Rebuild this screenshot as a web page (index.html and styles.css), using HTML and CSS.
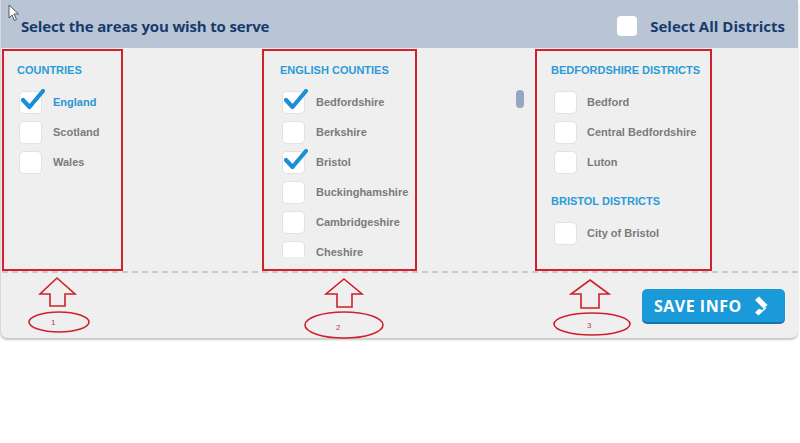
FILE: index.html
```html
<!DOCTYPE html>
<html>
<head>
<meta charset="utf-8">
<link rel="stylesheet" href="styles.css">
</head>
<body>
<div class="panel">
  <svg class="cursor" width="12" height="18" viewBox="0 0 12 18"><path d="M1 1 L1 14 L4 11 L6.5 16.5 L8.5 15.5 L6 10 L10.5 10 Z" fill="#fff" stroke="#555" stroke-width="1"/></svg>
  <div class="header">
    <div class="title">Select the areas you wish to serve</div>
    <div class="select-all"><span class="box big"></span><span>Select All Districts</span></div>
  </div>
  <div class="body">
    <div class="col col1">
      <div class="heading">COUNTRIES</div>
      <div class="row on"><span class="box"><svg class="tick" viewBox="0 0 24 22"><path d="M2 11 L8.5 18 L22 2" fill="none" stroke="#1b8fd6" stroke-width="4.2" stroke-linecap="round" stroke-linejoin="round"/></svg></span><span class="label">England</span></div>
      <div class="row"><span class="box"></span><span class="label">Scotland</span></div>
      <div class="row"><span class="box"></span><span class="label">Wales</span></div>
    </div>
    <div class="col col2">
      <div class="heading">ENGLISH COUNTIES</div>
      <div class="list">
        <div class="row"><span class="box"><svg class="tick" viewBox="0 0 24 22"><path d="M2 11 L8.5 18 L22 2" fill="none" stroke="#1b8fd6" stroke-width="4.2" stroke-linecap="round" stroke-linejoin="round"/></svg></span><span class="label">Bedfordshire</span></div>
        <div class="row"><span class="box"></span><span class="label">Berkshire</span></div>
        <div class="row"><span class="box"><svg class="tick" viewBox="0 0 24 22"><path d="M2 11 L8.5 18 L22 2" fill="none" stroke="#1b8fd6" stroke-width="4.2" stroke-linecap="round" stroke-linejoin="round"/></svg></span><span class="label">Bristol</span></div>
        <div class="row"><span class="box"></span><span class="label">Buckinghamshire</span></div>
        <div class="row"><span class="box"></span><span class="label">Cambridgeshire</span></div>
        <div class="row"><span class="box"></span><span class="label">Cheshire</span></div>
      </div>
    </div>
    <div class="col col3">
      <div class="heading">BEDFORDSHIRE DISTRICTS</div>
      <div class="row"><span class="box"></span><span class="label">Bedford</span></div>
      <div class="row"><span class="box"></span><span class="label">Central Bedfordshire</span></div>
      <div class="row"><span class="box"></span><span class="label">Luton</span></div>
      <div class="heading second">BRISTOL DISTRICTS</div>
      <div class="row"><span class="box"></span><span class="label">City of Bristol</span></div>
    </div>
    <div class="thumb"></div>
  </div>
  <div class="footer">
    <button class="save">SAVE INFO <svg class="chev" width="16" height="20" viewBox="0 0 16 20"><path d="M2 4 L6 0.5 L14.5 9 L10.5 12.5 Z" fill="#fff"/><path d="M9 14 L12.5 11 L13.5 12 L5.5 19.5 L2 16.5 L6 12.8 Z" fill="#fff"/></svg></button>
    <svg class="notes" width="800" height="70" viewBox="0 274 800 70">
      <g fill="none" stroke="#d0202a" stroke-width="1.6">
        <path d="M57 279 L75 295 L65 295 L65 307 L50 307 L50 295 L40 295 Z"/>
        <ellipse cx="59" cy="323" rx="30" ry="10"/>
        <path d="M344 280 L362 295 L352 295 L352 308 L337 308 L337 295 L326 295 Z"/>
        <ellipse cx="344" cy="326" rx="39" ry="13"/>
        <path d="M590 281 L609 295 L599 295 L599 309 L581 309 L581 295 L571 295 Z"/>
        <ellipse cx="592" cy="325" rx="38" ry="11"/>
      </g>
      <g fill="#b0404e" font-family="Liberation Sans, sans-serif" font-size="8">
        <text x="51" y="326">1</text>
        <text x="336" y="331">2</text>
        <text x="587" y="329">3</text>
      </g>
    </svg>
  </div>
</div>
</body>
</html>
```
FILE: styles.css
```css
html, body {
  margin: 0;
  padding: 0;
  background: #fff;
}
body {
  font-family: "Liberation Sans", Arial, sans-serif;
  width: 800px;
  height: 443px;
  overflow: hidden;
}
.panel {
  position: relative;
  width: 797px;
  background: #efefef;
  border-left: 1px solid #d9d9d9;
  border-radius: 0 0 7px 7px;
  box-shadow: 0 2px 2px #c8c8c8;
  height: 338px;
}
.cursor {
  position: absolute;
  left: 7px;
  top: 4px;
}
.header {
  height: 48px;
  background: #b9c5d5;
  display: flex;
  align-items: center;
  justify-content: space-between;
  padding: 0 13px 0 20px;
  box-sizing: border-box;
}
.title {
  font-family: "Open Sans", sans-serif;
  font-weight: 700;
  font-size: 15px;
  color: #173a6d;
  padding-top: 4px;
  letter-spacing: -0.15px;
}
.select-all {
  display: flex;
  align-items: center;
  gap: 13px;
  font-family: "Open Sans", sans-serif;
  font-weight: 700;
  font-size: 15px;
  color: #173a6d;
  padding-top: 4px;
}
.box {
  position: relative;
  display: inline-block;
  width: 21px;
  height: 21px;
  background: #fff;
  border-radius: 4px;
  box-shadow: 0 0 0 1px #e2e2e2;
  flex: none;
}
.box.big {
  width: 20px;
  height: 20px;
  box-shadow: none;
}
.tick {
  position: absolute;
  left: 1px;
  top: -3px;
  width: 24px;
  height: 22px;
}
.body {
  position: relative;
  height: 225px;
  border-bottom: 2px dashed #c9c9c9;
  display: flex;
  align-items: flex-start;
  padding-top: 1px;
  box-sizing: border-box;
  margin-left: 1px;
}
.col {
  border: 2px solid #d3212b;
  height: 222px;
  box-sizing: border-box;
  padding-top: 12px;
}
.col1 {
  margin-left: 0;
  width: 121px;
  padding-left: 13px;
}
.col2 {
  margin-left: 139px;
  width: 155px;
  padding-left: 16px;
}
.col3 {
  margin-left: 118px;
  width: 177px;
  padding-left: 14px;
}
.heading {
  font-weight: 700;
  font-size: 11px;
  line-height: 14px;
  color: #2a9bd8;
  margin-bottom: 10px;
}
.heading.second {
  margin-top: 17px;
  margin-bottom: 10px;
}
.row {
  display: flex;
  align-items: center;
  height: 30px;
  padding-left: 3px;
}
.col3 .row {
  padding-left: 4px;
}
.label {
  font-weight: 700;
  font-size: 11px;
  color: #7b7b7b;
  margin-left: 12px;
}
.col3 .label {
  margin-left: 11px;
}
.row.on .label {
  color: #2a95d4;
}
.list {
  height: 170px;
  overflow: hidden;
}
.thumb {
  position: absolute;
  left: 514px;
  top: 42px;
  width: 8px;
  height: 18px;
  border-radius: 4px;
  background: #93a6c2;
}
.footer {
  position: relative;
  height: 63px;
  display: flex;
  justify-content: flex-end;
  align-items: flex-start;
  padding: 16px 13px 0 0;
  box-sizing: border-box;
}
.save {
  position: relative;
  z-index: 1;
  width: 143px;
  height: 33px;
  background: #1a9ad9;
  border: none;
  border-radius: 5px;
  box-shadow: 0 2px 0 #1478b0;
  color: #fff;
  font-family: "Open Sans", sans-serif;
  font-weight: 700;
  font-size: 16px;
  letter-spacing: 0.5px;
  display: flex;
  align-items: center;
  padding: 0 0 0 12px;
  gap: 11px;
  box-sizing: border-box;
}
.chev {
  margin-top: 1px;
}
.notes {
  position: absolute;
  left: -1px;
  top: 0;
}
```
